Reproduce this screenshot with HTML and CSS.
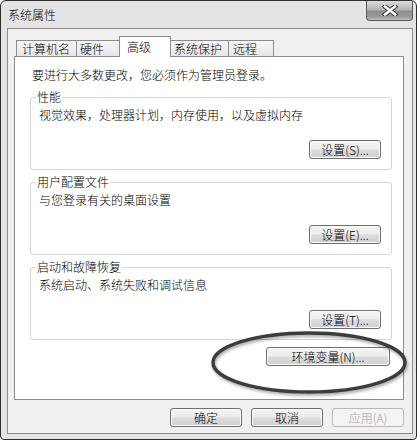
FILE: index.html
```html
<!DOCTYPE html>
<html lang="zh-CN">
<head>
<meta charset="utf-8">
<title>系统属性</title>
<link rel="stylesheet" href="styles.css">
</head>
<body>
<div class="window">
  <div class="titlebar">
    <span class="title">系统属性</span>
    <div class="close">
      <svg width="16" height="11" viewBox="0 0 16 11">
        <path d="M3 1.5 L13 9.5 M13 1.5 L3 9.5" stroke="#3a3a3a" stroke-width="4.6" stroke-linecap="square" fill="none"/>
        <path d="M3 1.5 L13 9.5 M13 1.5 L3 9.5" stroke="#ffffff" stroke-width="2.6" stroke-linecap="square" fill="none"/>
      </svg>
    </div>
  </div>
  <div class="client">
    <div class="tabs">
      <div class="tab t1">计算机名</div>
      <div class="tab t2">硬件</div>
      <div class="tab sel">高级</div>
      <div class="tab t4">系统保护</div>
      <div class="tab t5">远程</div>
    </div>
    <div class="panel">
      <p class="intro">要进行大多数更改，您必须作为管理员登录。</p>
      <fieldset class="group">
        <legend>性能</legend>
        <p class="desc">视觉效果，处理器计划，内存使用，以及虚拟内存</p>
        <div class="btnrow"><button class="btn">设置(S)...</button></div>
      </fieldset>
      <fieldset class="group">
        <legend>用户配置文件</legend>
        <p class="desc">与您登录有关的桌面设置</p>
        <div class="btnrow"><button class="btn">设置(E)...</button></div>
      </fieldset>
      <fieldset class="group">
        <legend>启动和故障恢复</legend>
        <p class="desc">系统启动、系统失败和调试信息</p>
        <div class="btnrow"><button class="btn">设置(T)...</button></div>
      </fieldset>
      <div class="envrow"><button class="btn env">环境变量(N)...</button></div>
    </div>
    <div class="actions">
      <button class="btn">确定</button>
      <button class="btn">取消</button>
      <button class="btn disabled">应用(A)</button>
    </div>
  </div>
  <svg class="mark" width="202" height="66" viewBox="0 0 202 66">
    <ellipse cx="100" cy="32.5" rx="96" ry="29.5" fill="none" stroke="#3c3c3c" stroke-width="3.4"/>
  </svg>
</div>
</body>
</html>
```
FILE: styles.css
```css
* { box-sizing: border-box; }
html, body { margin: 0; padding: 0; background: #ffffff; }
body {
  font-family: "Noto Sans CJK SC", "Noto Sans", sans-serif;
  font-size: 12px;
  font-weight: 300;
  line-height: 14px;
  color: #000;
}
.window {
  position: relative;
  width: 417px;
  height: 440px;
  border: 1px solid #2e2e2e;
  border-radius: 6px 6px 4px 4px;
  background: #e4e4e4;
  padding: 0 3px 5px 6px;
  display: flex;
  flex-direction: column;
}
.titlebar {
  height: 27px;
  display: flex;
  align-items: center;
  justify-content: space-between;
}
.title { margin-left: 1px; color: #000; }
.close {
  align-self: flex-start;
  width: 47px;
  height: 20px;
  border: 1px solid #5a5a5a;
  border-top: none;
  border-radius: 0 0 4px 4px;
  background: linear-gradient(#dcdcdc 0%, #b4b4b4 45%, #8e8e8e 55%, #9a9a9a 85%, #c4c4c4 100%);
  display: flex;
  align-items: center;
  justify-content: center;
}
.close svg { display: block; }
.client {
  flex: 1;
  border: 1px solid #8c8c8c;
  background: #f0f0f0;
  padding: 7px 8px 6px 6px;
  display: flex;
  flex-direction: column;
}
.tabs {
  height: 21px;
  display: flex;
  align-items: flex-end;
  padding-left: 2px;
}
.tab {
  height: 17px;
  border: 1px solid #8c8c8c;
  border-bottom: none;
  background: linear-gradient(#f6f6f6, #e6e6e6);
  margin-right: -1px;
  padding-top: 1px;
  white-space: nowrap;
}
.t1 { width: 61px; padding-left: 5px; }
.t2 { width: 46px; padding-left: 3px; }
.sel {
  position: relative;
  z-index: 2;
  width: 52px;
  height: 21px;
  margin: 0 -2px 0 -2px;
  padding-left: 7px;
  padding-top: 3px;
  background: #ffffff;
}
.t4 { width: 60px; padding-left: 4px; }
.t5 { width: 46px; padding-left: 4px; }
.panel {
  position: relative;
  z-index: 1;
  height: 344px;
  margin-top: -1px;
  border: 1px solid #8c8c8c;
  background: #ffffff;
  padding: 11px 11px 0 15px;
}
.intro { margin: 0 0 8px 2px; }
.group {
  margin: 0 0 5px 0;
  padding: 4px 10px 10px 8px;
  border: 1px solid #d6d6d6;
  border-radius: 3px;
  min-width: 0;
}
.group legend {
  padding: 0 1px;
  margin-left: -3px;
  line-height: 14px;
}
.desc { margin: 0; }
.btnrow {
  margin-top: 18px;
  display: flex;
  justify-content: flex-end;
}
.btn {
  font-family: "Noto Sans CJK SC", "Noto Sans", sans-serif;
  font-size: 12px;
  font-weight: 300;
  line-height: 15px;
  color: #000;
  width: 72px;
  height: 19px;
  padding: 0;
  border: 1px solid #6e6e6e;
  border-radius: 3px;
  background: linear-gradient(#f4f4f4 0%, #ececec 48%, #dcdcdc 52%, #d0d0d0 100%);
  box-shadow: inset 0 0 0 1px #fbfbfb;
  white-space: nowrap;
}
.envrow {
  margin-top: 7px;
  margin-right: 2px;
  display: flex;
  justify-content: flex-end;
}
.env { width: 124px; }
.actions {
  margin-top: 8px;
  display: flex;
  justify-content: flex-end;
  gap: 9px;
}
.disabled {
  color: #a3a3a3;
  border-color: #b8b8b8;
  background: #f4f4f4;
  box-shadow: none;
}
.mark {
  position: absolute;
  left: 208px;
  top: 329px;
  z-index: 5;
  filter: drop-shadow(1px 2px 1.5px rgba(0, 0, 0, 0.35));
}
```
